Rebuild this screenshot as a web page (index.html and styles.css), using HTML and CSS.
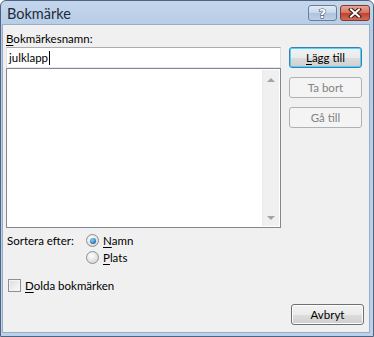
FILE: index.html
```html
<!DOCTYPE html>
<html lang="sv">
<head>
<meta charset="UTF-8">
<link rel="stylesheet" href="styles.css">
<title>Bokmärke</title>
</head>
<body>
<div class="frame">
	<div class="titlebar">
		<span class="title">Bokmärke</span>
		<span class="tbtn help">?</span>
		<span class="tbtn close">
			<svg width="16" height="10" viewBox="0 0 16 10">
				<path d="M4 1.5 L12 8.5 M12 1.5 L4 8.5" stroke="#3a1a14" stroke-width="4" stroke-linecap="square"/>
				<path d="M4 1.5 L12 8.5 M12 1.5 L4 8.5" stroke="#fff" stroke-width="2" stroke-linecap="square"/>
			</svg>
		</span>
	</div>

	<div class="client">
		<div class="main">
			<div class="left">
				<div class="label"><u>B</u>okmärkesnamn:</div>
				<div class="textbox">julklapp<span class="caret"></span></div>
				<div class="listbox">
					<div class="list"></div>
					<div class="vscroll">
						<span class="arr up"></span>
						<span class="arr down"></span>
					</div>
				</div>

				<div class="sort">
					<div class="sortlabel">Sortera efter:</div>
					<div class="radios">
						<div class="opt"><span class="radio on"></span><u>N</u>amn</div>
						<div class="opt"><span class="radio"></span><u>P</u>lats</div>
					</div>
				</div>

				<div class="opt check"><span class="box"></span><u>D</u>olda bokmärken</div>
			</div>

			<div class="right">
				<div class="btn default"><u>L</u>ägg till</div>
				<div class="btn disabled">Ta bort</div>
				<div class="btn disabled">Gå till</div>
			</div>
		</div>

		<div class="bottom">
			<div class="btn">Avbryt</div>
		</div>
	</div>
</div>
</body>
</html>
```

FILE: styles.css
```css
* {
	margin: 0;
	padding: 0;
	box-sizing: border-box;
}

body {
	background: #fff;
	font: 11.5px Lato, "Noto Sans", sans-serif;
	color: #000;
}

u {
	text-decoration: underline;
	text-underline-offset: 2px;
}

.frame {
	width: 374px;
	height: 337px;
	border: 1px solid #4f6480;
	border-radius: 6px 6px 0 0;
	background: linear-gradient(#c3d6ec, #b7cde6 25px, #bcd2ea);
	padding: 0 3px 3px 1px;
	display: flex;
	flex-direction: column;
}

.titlebar {
	height: 23px;
	display: flex;
	align-items: flex-start;
	padding-top: 4px;
}

.title {
	font-size: 14.5px;
	color: #1e2b3b;
	margin-left: 5px;
	flex: 1;
}

.tbtn {
	height: 16px;
	border-radius: 3px;
	display: flex;
	align-items: center;
	justify-content: center;
}

.help {
	width: 29px;
	border: 1px solid #6b7e98;
	background: linear-gradient(#e3ecf6, #c6d6ea 50%, #aec3dd 51%, #bccfe6);
	color: #fff;
	font: bold 13px "DejaVu Sans", sans-serif;
	-webkit-text-stroke: 1px #34445a;
	paint-order: stroke fill;
	margin-right: 3px;
}

.close {
	width: 30px;
	border: 1px solid #7b3a33;
	background: linear-gradient(#e8a593, #d5725f 50%, #c2402f 51%, #d16b55);
}

.client {
	flex: 1;
	background: #f0f0f0;
	border: 1px solid #98aec8;
	display: flex;
	flex-direction: column;
}

.main {
	display: flex;
	gap: 8px;
	padding-left: 3px;
}

.left {
	width: 275px;
}

.label {
	line-height: 15px;
	margin-top: 6px;
	margin-bottom: 1px;
}

.textbox {
	height: 21px;
	background: #fff;
	border: 1px solid #abadb3;
	border-color: #abadb3 #dbdfe6 #e3e9ef #e2e3ea;
	padding: 1px 2px;
	line-height: 17px;
	display: flex;
	align-items: center;
}

.caret {
	width: 1px;
	height: 14px;
	background: #000;
	margin-left: 1px;
}

.listbox {
	height: 160px;
	background: #fff;
	border: 1px solid #828790;
	display: flex;
	padding: 1px 1px 1px 0;
}

.list {
	flex: 1;
}

.vscroll {
	width: 17px;
	background: #f0f0f0;
	border-left: 1px solid #ececec;
	display: flex;
	flex-direction: column;
	justify-content: space-between;
	align-items: center;
	padding: 8px 0 6px;
}

.arr {
	width: 0;
	height: 0;
	border-left: 4px solid transparent;
	border-right: 4px solid transparent;
}

.up {
	border-bottom: 4px solid #a3a3a3;
}

.down {
	border-top: 4px solid #a3a3a3;
}

.sort {
	display: flex;
	margin-top: 4px;
}

.sortlabel {
	width: 79px;
	line-height: 17px;
	margin-left: 1px;
}

.opt {
	display: flex;
	align-items: center;
	height: 17px;
}

.radio {
	width: 13px;
	height: 13px;
	border-radius: 50%;
	border: 1px solid #8e8f8f;
	background: radial-gradient(circle at 40% 35%, #fff, #e0e0e0 60%, #cfd1d3);
	margin-right: 4px;
	display: flex;
	align-items: center;
	justify-content: center;
}

.radio.on::after {
	content: "";
	width: 6px;
	height: 6px;
	border-radius: 50%;
	background: radial-gradient(circle at 40% 35%, #8fd4f7, #1c6fb0 70%, #17488a);
}

.check {
	margin-top: 11px;
	margin-left: 2px;
}

.box {
	width: 13px;
	height: 13px;
	border: 1px solid #8e8f8f;
	background: linear-gradient(135deg, #dcdcdc, #fbfbfb);
	box-shadow: inset 0 0 0 1px #f4f4f4;
	margin-right: 4px;
}

.right {
	width: 73px;
	padding-top: 22px;
	display: flex;
	flex-direction: column;
	gap: 9px;
}

.btn {
	width: 73px;
	height: 21px;
	border: 1px solid #707070;
	border-radius: 3px;
	background: linear-gradient(#f2f2f2, #ebebeb 50%, #dddddd 51%, #cfcfcf);
	box-shadow: inset 0 0 0 1px #fcfcfc;
	display: flex;
	align-items: center;
	justify-content: center;
	line-height: 15px;
}

.btn.default {
	border-color: #3c7fb1;
	box-shadow: inset 0 0 0 1px #48d8fb;
}

.btn.disabled {
	border-color: #adb2b5;
	background: #f4f4f4;
	box-shadow: none;
	color: #838383;
}

.bottom {
	margin-top: auto;
	display: flex;
	justify-content: flex-end;
	padding: 0 5px 7px 0;
}
```
